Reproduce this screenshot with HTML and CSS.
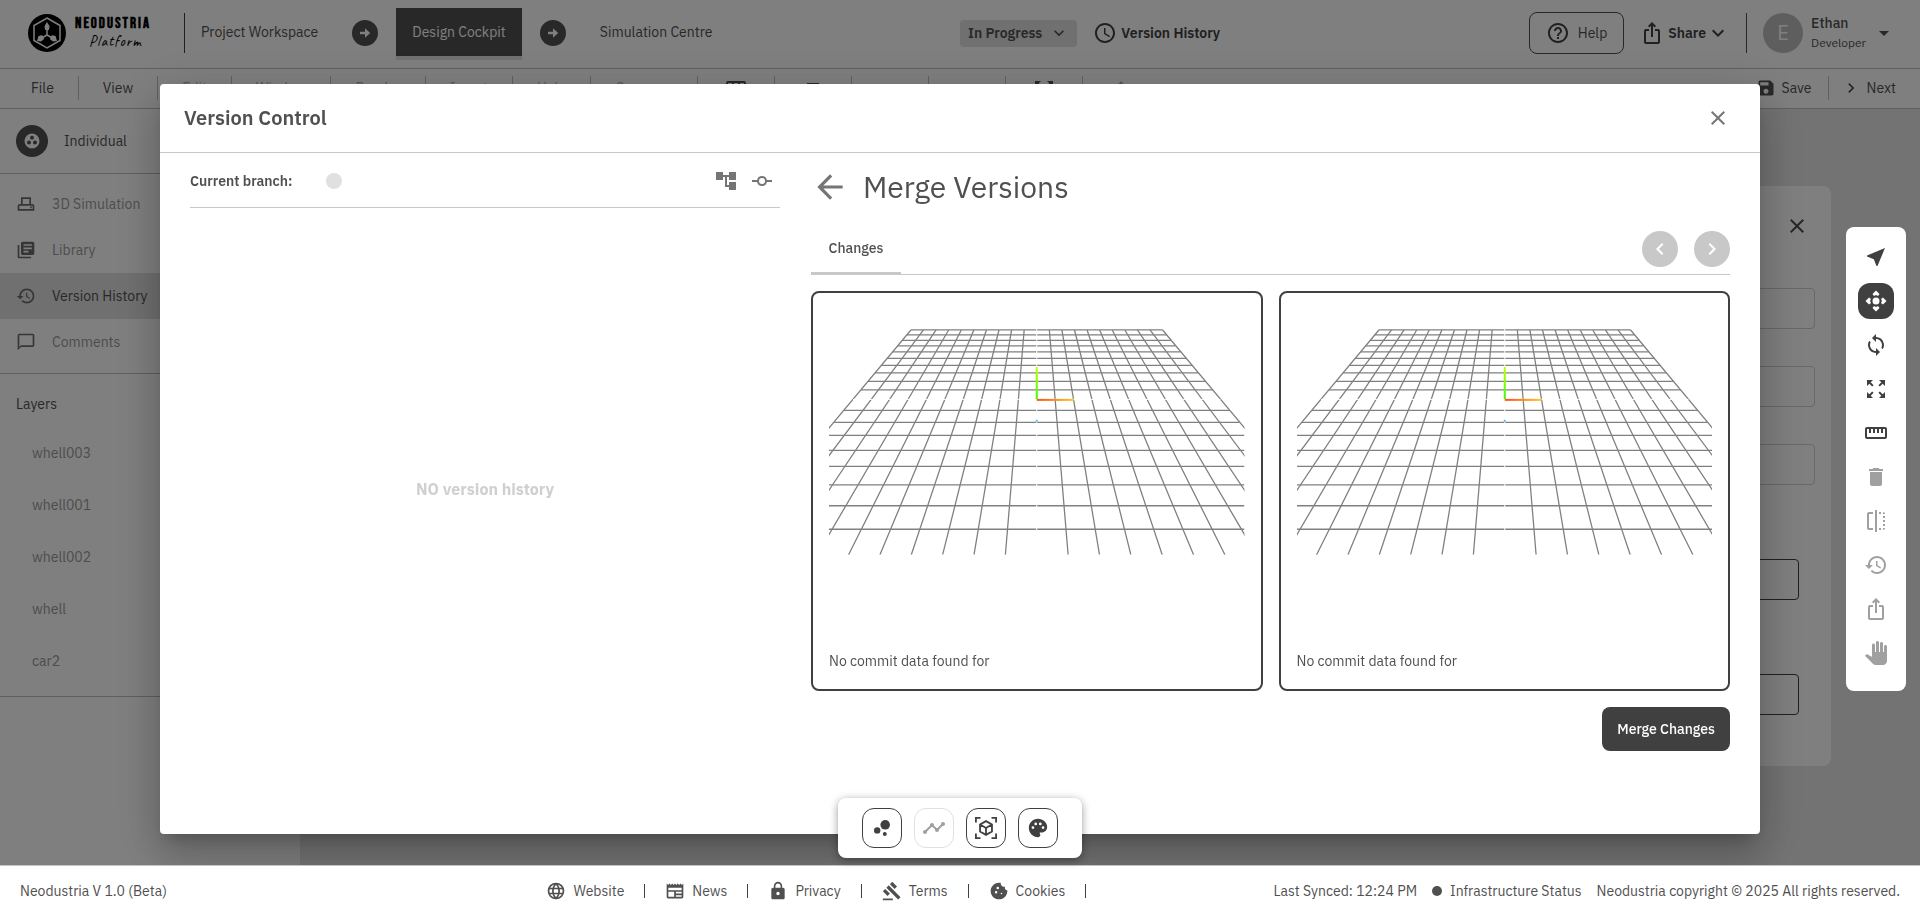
FILE: index.html
```html
<!DOCTYPE html>
<html lang="en">
<head>
  <meta charset="UTF-8">
  <meta name="viewport" content="width=device-width, initial-scale=1">
  <title>Neodustria Platform - Version Control</title>
  <link rel="stylesheet" href="styles.css">
</head>
<body>

  <!-- icons -->
  <svg class="sprite" xmlns="http://www.w3.org/2000/svg" aria-hidden="true">
    <symbol id="i-arrow-circle" viewBox="0 0 26 26">
      <circle cx="13" cy="13" r="13"/>
      <path fill="#fff" d="M8 11.7h5V8.2l5.2 4.8-5.2 4.8v-3.5H8z"/>
    </symbol>
    <symbol id="i-clock" viewBox="0 0 24 24"><path d="M11.99 2C6.47 2 2 6.48 2 12s4.47 10 9.99 10C17.52 22 22 17.52 22 12S17.52 2 11.99 2zM12 20c-4.42 0-8-3.58-8-8s3.58-8 8-8 8 3.58 8 8-3.58 8-8 8zm.5-13H11v6l5.25 3.15.75-1.23-4.5-2.67z"/></symbol>
    <symbol id="i-help" viewBox="0 0 24 24"><path d="M11 18h2v-2h-2v2zm1-16C6.48 2 2 6.48 2 12s4.48 10 10 10 10-4.48 10-10S17.52 2 12 2zm0 18c-4.41 0-8-3.59-8-8s3.59-8 8-8 8 3.59 8 8-3.59 8-8 8zm0-14c-2.21 0-4 1.79-4 4h2c0-1.1.9-2 2-2s2 .9 2 2c0 2-3 1.75-3 5h2c0-2.25 3-2.5 3-5 0-2.21-1.79-4-4-4z"/></symbol>
    <symbol id="i-share" viewBox="0 0 24 24"><path d="M16 5l-1.42 1.42-1.59-1.59V16h-1.98V4.83L9.42 6.42 8 5l4-4 4 4zm4 5v11c0 1.1-.9 2-2 2H6c-1.11 0-2-.9-2-2V10c0-1.11.89-2 2-2h3v2H6v11h12V10h-3V8h3c1.1 0 2 .89 2 2z"/></symbol>
    <symbol id="i-down" viewBox="0 0 24 24"><path d="M7.41 8.59 12 13.17l4.59-4.58L18 10l-6 6-6-6z"/></symbol>
    <symbol id="i-caret" viewBox="0 0 24 24"><path d="m7 10 5 5 5-5z"/></symbol>
    <symbol id="i-left" viewBox="0 0 24 24"><path d="M15.41 7.41 14 6l-6 6 6 6 1.41-1.41L10.83 12z"/></symbol>
    <symbol id="i-right" viewBox="0 0 24 24"><path d="M10 6 8.59 7.41 13.17 12l-4.58 4.59L10 18l6-6z"/></symbol>
    <symbol id="i-close" viewBox="0 0 24 24"><path d="M19 6.41 17.59 5 12 10.59 6.41 5 5 6.41 10.59 12 5 17.59 6.41 19 12 13.41 17.59 19 19 17.59 13.41 12z"/></symbol>
    <symbol id="i-back" viewBox="0 0 24 24"><path d="M20 11H7.83l5.59-5.59L12 4l-8 8 8 8 1.41-1.41L7.83 13H20z"/></symbol>
    <symbol id="i-save" viewBox="0 0 24 24"><path d="M17 3H5c-1.11 0-2 .9-2 2v14c0 1.1.89 2 2 2h14c1.1 0 2-.9 2-2V7l-4-4zm-5 16c-1.66 0-3-1.34-3-3s1.34-3 3-3 3 1.34 3 3-1.34 3-3 3zm3-10H5V5h10v4z"/></symbol>
    <symbol id="i-table" viewBox="0 0 24 24"><path d="M20 3H4a2 2 0 0 0-2 2v14a2 2 0 0 0 2 2h16a2 2 0 0 0 2-2V5a2 2 0 0 0-2-2zM8 19H4v-6h4zm0-8H4V5h4zm6 8h-4v-6h4zm0-8h-4V5h4zm6 8h-4v-6h4zm0-8h-4V5h4z"/></symbol>
    <symbol id="i-layers" viewBox="0 0 24 24"><path d="M6 5h12v5H6zm0 7h12v5H6z"/></symbol>
    <symbol id="i-undo" viewBox="0 0 24 24"><path d="M12.5 8c-2.65 0-5.05.99-6.9 2.6L2 7v9h9l-3.62-3.62A8 8 0 0 1 20.1 16l2.37-.78A10.5 10.5 0 0 0 12.5 8z"/></symbol>
    <symbol id="i-up" viewBox="0 0 24 24"><path d="m12 3 7 8h-4v8H9v-8H5z"/></symbol>
    <symbol id="i-group" viewBox="0 0 24 24">
      <circle cx="12" cy="12" r="10"/>
      <g fill="#505050"><circle cx="12" cy="7.5" r="2.6"/><circle cx="8" cy="14" r="2.6"/><circle cx="16" cy="14" r="2.6"/></g>
    </symbol>
    <symbol id="i-sim" viewBox="0 0 24 24"><path fill="none" stroke="currentColor" stroke-width="2" d="M7 13V5h10v8M3 19v-4.5q0-1.5 1.5-1.5h15q1.5 0 1.5 1.5V19zM17 16h2"/></symbol>
    <symbol id="i-library" viewBox="0 0 24 24"><path d="M4 6H2v14c0 1.1.9 2 2 2h14v-2H4V6zm16-4H8c-1.1 0-2 .9-2 2v12c0 1.1.9 2 2 2h12c1.1 0 2-.9 2-2V4c0-1.1-.9-2-2-2zm-1 9H9V9h10v2zm-4 4H9v-2h6v2zm4-8H9V5h10v2z"/></symbol>
    <symbol id="i-history" viewBox="0 0 24 24"><path d="M13 3c-4.97 0-9 4.03-9 9H1l3.89 3.89.07.14L9 12H6c0-3.87 3.13-7 7-7s7 3.13 7 7-3.13 7-7 7c-1.93 0-3.68-.79-4.94-2.06l-1.42 1.42C8.27 19.99 10.51 21 13 21c4.97 0 9-4.03 9-9s-4.03-9-9-9zm-1 5v5l4.28 2.54.72-1.21-3.5-2.08V8H12z"/></symbol>
    <symbol id="i-comment" viewBox="0 0 24 24"><path d="M20 2H4c-1.1 0-2 .9-2 2v18l4-4h14c1.1 0 2-.9 2-2V4c0-1.1-.9-2-2-2zm0 14H6l-2 2V4h16v12z"/></symbol>
    <symbol id="i-tree" viewBox="0 0 24 24"><path d="M22 11V3h-7v3H9V3H2v8h7V8h2v10h4v3h7v-8h-7v3h-2V8h2v3z"/></symbol>
    <symbol id="i-commit" viewBox="0 0 24 24"><path d="M16.9 11A5 5 0 0 0 7.1 11H2v2h5.1a5 5 0 0 0 9.8 0H22v-2zM12 15a3 3 0 1 1 0-6 3 3 0 0 1 0 6z"/></symbol>
    <symbol id="i-near" viewBox="0 0 24 24"><path d="M21 3 3 10.530v.98l6.840 2.650L12.480 21h.98z"/></symbol>
    <symbol id="i-move" viewBox="0 0 24 24"><circle cx="12" cy="12" r="3.5"/><path d="M12 1.500l3.500 3.500-1.500 2L12 6l-2 1-1.500-2zM12 22.500l3.500-3.500-1.500-2L12 18l-2-1-1.500 2zM1.500 12l3.500-3.500 2 1.500L6 12l1 2-2 1.500zM22.500 12l-3.500-3.500-2 1.500L18 12l-1 2 2 1.500z"/></symbol>
    <symbol id="i-rotate" viewBox="0 0 24 24"><path d="M12 4V1L8 5l4 4V6c3.310 0 6 2.690 6 6 0 1.010-.25 1.970-.7 2.800l1.460 1.460A7.930 7.930 0 0 0 20 12c0-4.420-3.580-8-8-8zm0 14c-3.310 0-6-2.690-6-6 0-1.010.25-1.970.7-2.800L5.240 7.740A7.930 7.930 0 0 0 4 12c0 4.420 3.580 8 8 8v3l4-4-4-4v3z"/></symbol>
    <symbol id="i-expand" viewBox="0 0 24 24"><path d="m15 3 2.300 2.300-2.890 2.870 1.420 1.420L18.700 6.700 21 9V3zM3 9l2.300-2.300 2.870 2.890 1.420-1.420L6.700 5.300 9 3H3zm6 12-2.300-2.300 2.890-2.870-1.420-1.420L5.300 17.300 3 15v6zm12-6-2.300 2.300-2.870-2.890-1.420 1.420 2.890 2.870L15 21h6z"/></symbol>
    <symbol id="i-ruler" viewBox="0 0 24 24"><path d="M21 6H3c-1.100 0-2 .9-2 2v8c0 1.100.9 2 2 2h18c1.100 0 2-.9 2-2V8c0-1.100-.9-2-2-2zm0 10H3V8h2v4h2V8h2v4h2V8h2v4h2V8h2v4h2V8h2v8z"/></symbol>
    <symbol id="i-trash" viewBox="0 0 24 24"><path d="M6 19c0 1.100.9 2 2 2h8c1.100 0 2-.9 2-2V7H6v12zM19 4h-3.500l-1-1h-5l-1 1H5v2h14V4z"/></symbol>
    <symbol id="i-flip" viewBox="0 0 24 24"><path d="M15 21h2v-2h-2v2zm4-12h2V7h-2v2zM3 5v14c0 1.100.9 2 2 2h4v-2H5V5h4V3H5c-1.100 0-2 .9-2 2zm16-2v2h2c0-1.100-.9-2-2-2zm-8 20h2V1h-2v22zm8-6h2v-2h-2v2zM15 5h2V3h-2v2zm4 8h2v-2h-2v2zm0 8c1.100 0 2-.9 2-2h-2v2z"/></symbol>
    <symbol id="i-hand" viewBox="0 0 24 24"><path d="M23 5.500V20c0 2.200-1.800 4-4 4h-7.300c-1.080 0-2.100-.43-2.850-1.190L1 14.830s1.260-1.230 1.300-1.250c.22-.19.490-.29.790-.29.220 0 .420.060.6.160.040.010 4.310 2.460 4.310 2.460V4c0-.83.670-1.500 1.500-1.500S11 3.170 11 4v7h1V1.500c0-.83.670-1.500 1.500-1.500S15 .67 15 1.500V11h1V2.500c0-.83.670-1.500 1.500-1.500s1.500.67 1.500 1.500V11h1V5.500c0-.83.670-1.500 1.500-1.500s1.500.67 1.500 1.500z"/></symbol>
    <symbol id="i-bubble" viewBox="0 0 24 24"><circle cx="7.200" cy="14.400" r="3.200"/><circle cx="14.800" cy="18" r="2"/><circle cx="15.200" cy="8.800" r="4.800"/></symbol>
    <symbol id="i-timeline" viewBox="0 0 24 24"><path d="M23 8c0 1.100-.9 2-2 2-.18 0-.35-.02-.51-.07l-3.560 3.550c.05.160.07.340.07.520 0 1.100-.9 2-2 2s-2-.9-2-2c0-.18.020-.36.070-.52l-2.550-2.550c-.16.050-.34.070-.52.070s-.36-.02-.52-.07l-4.550 4.560c.05.160.07.330.07.510 0 1.100-.9 2-2 2s-2-.9-2-2 .9-2 2-2c.18 0 .35.020.51.070l4.560-4.550C8.020 9.360 8 9.180 8 9c0-1.100.9-2 2-2s2 .9 2 2c0 .18-.02.360-.07.520l2.550 2.550c.16-.05.340-.07.520-.07s.36.020.52.070l3.550-3.560C19.020 8.350 19 8.180 19 8c0-1.100.9-2 2-2s2 .9 2 2z"/></symbol>
    <symbol id="i-cube" viewBox="0 0 24 24"><path fill="none" stroke="currentColor" stroke-width="2" d="M1 6V1h5M18 1h5v5M23 18v5h-5M6 23H1v-5M12 4.500l6.500 3.700v7.600L12 19.500l-6.500-3.700V8.200zM5.500 8.200l6.500 3.800 6.500-3.800M12 12v7.500"/></symbol>
    <symbol id="i-palette" viewBox="0 0 24 24"><path d="M12 2C6.490 2 2 6.490 2 12s4.490 10 10 10c1.380 0 2.500-1.120 2.500-2.500 0-.61-.23-1.200-.64-1.670-.08-.1-.13-.21-.13-.33 0-.28.22-.5.5-.5H16c3.310 0 6-2.690 6-6 0-4.960-4.490-9-10-9zm-5.500 11a1.500 1.500 0 1 1 0-3 1.500 1.500 0 0 1 0 3zm3-4a1.500 1.500 0 1 1 0-3 1.500 1.500 0 0 1 0 3zm5 0a1.500 1.500 0 1 1 0-3 1.500 1.500 0 0 1 0 3zm3 4a1.500 1.500 0 1 1 0-3 1.500 1.500 0 0 1 0 3z"/></symbol>
    <symbol id="i-globe" viewBox="0 0 24 24"><path fill="none" stroke="currentColor" stroke-width="2" d="M12 3a9 9 0 1 0 0 18 9 9 0 0 0 0-18zM12 3c-5 5-5 13 0 18 5-5 5-13 0-18zM4 9h16M4 15h16"/></symbol>
    <symbol id="i-news" viewBox="0 0 24 24"><path d="m22 3-1.670 1.670L18.670 3 17 4.670 15.330 3l-1.660 1.670L12 3l-1.670 1.670L8.670 3 7 4.670 5.330 3 3.670 4.670 2 3v16c0 1.100.9 2 2 2h16c1.100 0 2-.9 2-2V3zM11 19H4v-6h7v6zm9 0h-7v-2h7v2zm0-4h-7v-2h7v2zm0-4H4V8h16v3z"/></symbol>
    <symbol id="i-lock" viewBox="0 0 24 24"><path d="M18 8h-1V6c0-2.760-2.240-5-5-5S7 3.240 7 6v2H6c-1.100 0-2 .9-2 2v10c0 1.100.9 2 2 2h12c1.100 0 2-.9 2-2V10c0-1.100-.9-2-2-2zm-6 9c-1.100 0-2-.9-2-2s.9-2 2-2 2 .9 2 2-.9 2-2 2zm3.100-9H8.900V6c0-1.710 1.390-3.100 3.100-3.100s3.100 1.390 3.100 3.100v2z"/></symbol>
    <symbol id="i-gavel" viewBox="0 0 24 24"><path d="M1 21h12v2H1zM5.240 8.070l2.830-2.830 14.140 14.140-2.830 2.830zM12.320 1l5.660 5.660-2.830 2.830-5.660-5.660zM3.830 9.480l5.660 5.660-2.830 2.830L1 12.310z"/></symbol>
    <symbol id="i-cookie" viewBox="0 0 24 24"><path d="M21.950 10.990c-1.790-.03-3.700-1.950-2.680-4.220-2.980 1-5.770-1.590-5.190-4.560C6.950.71 2 6.580 2 12c0 5.520 4.480 10 10 10 5.890 0 10.540-5.080 9.950-11.010zM8.500 15a1.500 1.500 0 1 1 0-3 1.500 1.500 0 0 1 0 3zm2-5a1.500 1.500 0 1 1 0-3 1.500 1.500 0 0 1 0 3zm4.500 6a1 1 0 1 1 0-2 1 1 0 0 1 0 2z"/></symbol>

    <!-- empty 3D viewport: floor grid in perspective -->
    <linearGradient id="axis-y" gradientUnits="userSpaceOnUse" x1="0" y1="58" x2="0" y2="90"><stop stop-color="#c8ff00"/><stop offset="1" stop-color="#30ff00"/></linearGradient>
    <linearGradient id="axis-x" gradientUnits="userSpaceOnUse" x1="208" y1="0" x2="245" y2="0"><stop stop-color="#ff5020"/><stop offset="1" stop-color="#ffc820"/></linearGradient>
    <symbol id="floor-grid" viewBox="0 0 416 246">
      <g fill="none" stroke="#808080" stroke-width="1.3">
        <path d="M82 21H334M78 26H338M73 31.500H343M69 37H347M64 43H352M58 49.500H358M52 56.500H364M46 64H370M39 72.500H377M32 81H384M15 101.500H401M5 113.500H411M0 126.500H416M0 141.500H416M0 157.500H416M0 176H416M0 197H416M0 220.500H416"/>
        <path d="M82 21L-106 246M94.600 21L-74.600 246M107.200 21L-43.200 246M119.800 21L-11.800 246M132.400 21L19.600 246M145 21L51 246M157.600 21L82.400 246M170.200 21L113.800 246M182.800 21L145.200 246M195.400 21L176.600 246M220.600 21L239.400 246M233.200 21L270.800 246M245.800 21L302.200 246M258.400 21L333.600 246M271 21L365 246M283.600 21L396.400 246M296.200 21L427.800 246M308.800 21L459.200 246M321.400 21L490.600 246M334 21L522 246"/>
      </g>
      <path fill="none" stroke="#fff" d="M24 90.500H392M208 20V246"/>
      <path stroke="url(#axis-y)" stroke-width="2" d="M208 58V90"/>
      <rect x="208" y="90" width="37" height="2" fill="url(#axis-x)"/>
      <path fill="#40c8f0" d="M207 111h2v2h-2z"/>
    </symbol>
  </svg>

  <div class="app">
    <header class="topbar">
      <div class="topbar-left">
        <a class="logo" href="#">
          <svg width="38" height="38" viewBox="0 0 38 38" aria-hidden="true">
            <circle cx="19" cy="19" r="19"/>
            <path fill="none" stroke="#fff" stroke-width="1.500" d="M19 4l13 7.500v15L19 34 6 26.500v-15z"/>
            <path stroke="#fff" stroke-width="1.500" d="M19 13v8M19 21l-7 4M19 21l7 4"/>
            <path fill="#fff" d="M19 8l2 3.500v4.500h-4v-4.500zM9 27l1.500-5 4-.5 1.500 3.500-3 2.500zM29 27l-1.500-5-4-.5-1.500 3.500 3 2.500z"/>
            <circle cx="19" cy="13" r="2.500" fill="#fff"/><circle cx="13" cy="24" r="2.500" fill="#fff"/><circle cx="25" cy="24" r="2.500" fill="#fff"/>
          </svg>
          <span class="logo-text">
            <span class="logo-name">NEODUSTRIA</span>
            <span class="logo-sub">Platform</span>
          </span>
        </a>
        <nav class="stages">
          <a href="#">Project Workspace</a>
          <svg class="stage-arrow"><use href="#i-arrow-circle"/></svg>
          <a href="#" class="active">Design Cockpit</a>
          <svg class="stage-arrow"><use href="#i-arrow-circle"/></svg>
          <a href="#">Simulation Centre</a>
        </nav>
      </div>
      <div class="topbar-right">
        <button class="status">In Progress <svg class="icon-sm"><use href="#i-down"/></svg></button>
        <button class="history-btn"><svg class="icon"><use href="#i-clock"/></svg>Version History</button>
        <button class="help"><svg class="icon"><use href="#i-help"/></svg>Help</button>
        <button class="share"><svg class="icon"><use href="#i-share"/></svg>Share<svg class="icon icon-down"><use href="#i-down"/></svg></button>
        <button class="user">
          <span class="avatar">E</span>
          <span class="user-text"><span class="user-name">Ethan</span><span class="user-role">Developer</span></span>
          <svg class="icon"><use href="#i-caret"/></svg>
        </button>
      </div>
    </header>

    <nav class="menubar">
      <button>File</button>
      <button>View</button>
      <button disabled>Edit</button>
      <button disabled>Window</button>
      <button disabled>Render</button>
      <button disabled>Insert</button>
      <button disabled>Help</button>
      <button disabled>Compare</button>
      <button class="tool" aria-label="Table"><svg><use href="#i-table"/></svg></button>
      <button class="tool" aria-label="Layers"><svg><use href="#i-layers"/></svg></button>
      <button class="tool" disabled aria-label="Undo"><svg><use href="#i-undo"/></svg></button>
      <button class="tool" disabled aria-label="Redo"><svg><use href="#i-undo"/></svg></button>
      <button class="tool" aria-label="Full screen"><svg><use href="#i-expand"/></svg></button>
      <button class="tool tool-last" disabled aria-label="Upload"><svg><use href="#i-up"/></svg></button>
      <button class="save"><svg><use href="#i-save"/></svg>Save</button>
      <button class="next"><svg><use href="#i-right"/></svg>Next</button>
    </nav>

    <div class="workspace">
      <aside class="sidebar">
        <div class="owner">
          <span class="owner-icon"><svg><use href="#i-group"/></svg></span>
          Individual
        </div>
        <nav class="side-menu">
          <a href="#"><svg><use href="#i-sim"/></svg>3D Simulation</a>
          <a href="#"><svg><use href="#i-library"/></svg>Library</a>
          <a href="#" class="selected"><svg><use href="#i-history"/></svg>Version History</a>
          <a href="#"><svg><use href="#i-comment"/></svg>Comments</a>
        </nav>
        <section class="layers">
          <h2>Layers</h2>
          <ul>
            <li>whell003</li>
            <li>whell001</li>
            <li>whell002</li>
            <li>whell</li>
            <li>car2</li>
          </ul>
        </section>
      </aside>
      <main class="canvas">
        <form class="props">
          <button type="button" class="props-close" aria-label="Close panel"><svg class="icon"><use href="#i-close"/></svg></button>
          <input type="text" aria-label="Name">
          <input type="text" aria-label="Material">
          <input type="text" aria-label="Size">
          <button type="button" class="props-action" aria-label="Apply"></button>
          <button type="button" class="props-action" aria-label="Reset"></button>
        </form>
      </main>
    </div>

    <footer class="footer">
      <span>Neodustria V 1.0 (Beta)</span>
      <nav class="footer-links">
        <a href="#"><svg><use href="#i-globe"/></svg>Website</a>
        <a href="#"><svg><use href="#i-news"/></svg>News</a>
        <a href="#"><svg><use href="#i-lock"/></svg>Privacy</a>
        <a href="#"><svg><use href="#i-gavel"/></svg>Terms</a>
        <a href="#"><svg><use href="#i-cookie"/></svg>Cookies</a>
      </nav>
      <div class="footer-status">
        <span>Last Synced: 12:24 PM</span>
        <span class="infra">Infrastructure Status</span>
        <span>Neodustria copyright © 2025 All rights reserved.</span>
      </div>
    </footer>
  </div>

  <div class="backdrop">
    <div class="modal" role="dialog" aria-labelledby="modal-title">
      <div class="modal-header">
        <h1 id="modal-title">Version Control</h1>
        <button class="icon-btn" aria-label="Close"><svg class="icon"><use href="#i-close"/></svg></button>
      </div>
      <div class="modal-body">
        <section class="history">
          <div class="branch-bar">
            <strong>Current branch:</strong>
            <span class="branch-dot"></span>
            <button class="icon-btn" aria-label="Tree view"><svg class="icon"><use href="#i-tree"/></svg></button>
            <button class="icon-btn" aria-label="Commit view"><svg class="icon"><use href="#i-commit"/></svg></button>
          </div>
          <p class="empty">NO version history</p>
        </section>

        <section class="merge">
          <div class="merge-title">
            <button class="icon-btn" aria-label="Back"><svg><use href="#i-back"/></svg></button>
            <h2>Merge Versions</h2>
          </div>
          <div class="tabs">
            <button class="tab">Changes</button>
            <button class="round" aria-label="Previous"><svg class="icon"><use href="#i-left"/></svg></button>
            <button class="round" aria-label="Next"><svg class="icon"><use href="#i-right"/></svg></button>
          </div>
          <div class="compare">
            <article class="version">
              <svg viewBox="0 0 416 246"><use href="#floor-grid"/></svg>
              <p>No commit data found for</p>
            </article>
            <article class="version">
              <svg viewBox="0 0 416 246"><use href="#floor-grid"/></svg>
              <p>No commit data found for</p>
            </article>
          </div>
          <button class="merge-btn">Merge Changes</button>
        </section>
      </div>
    </div>
  </div>

  <div class="side-tools">
    <button aria-label="Select"><svg><use href="#i-near"/></svg></button>
    <button class="on" aria-label="Move"><svg><use href="#i-move"/></svg></button>
    <button aria-label="Rotate"><svg><use href="#i-rotate"/></svg></button>
    <button aria-label="Scale"><svg><use href="#i-expand"/></svg></button>
    <button aria-label="Measure"><svg><use href="#i-ruler"/></svg></button>
    <button disabled aria-label="Delete"><svg><use href="#i-trash"/></svg></button>
    <button disabled aria-label="Mirror"><svg><use href="#i-flip"/></svg></button>
    <button disabled aria-label="History"><svg><use href="#i-history"/></svg></button>
    <button disabled aria-label="Export"><svg><use href="#i-share"/></svg></button>
    <button disabled aria-label="Pan"><svg><use href="#i-hand"/></svg></button>
  </div>

  <div class="bottom-tools">
    <button aria-label="Points"><svg><use href="#i-bubble"/></svg></button>
    <button disabled aria-label="Edges"><svg><use href="#i-timeline"/></svg></button>
    <button aria-label="Object"><svg class="small"><use href="#i-cube"/></svg></button>
    <button aria-label="Material"><svg class="small"><use href="#i-palette"/></svg></button>
  </div>

</body>
</html>
```
FILE: styles.css
```css
* {
  box-sizing: border-box;
}
body {
  margin: 0;
  font-family: "IBM Plex Sans", Roboto, sans-serif;
  font-size: 14px;
  line-height: 20px;
  color: #505050;
  background: #fff;
}
h1, h2, p, ul {
  margin: 0;
  padding: 0;
}
ul { list-style: none; }
a {
  color: inherit;
  text-decoration: none;
}
button {
  display: flex;
  align-items: center;
  margin: 0;
  padding: 0;
  border: 0;
  background: none;
  font: inherit;
  color: inherit;
}
svg {
  display: block;
  flex: none;
  fill: currentColor;
}
.sprite {
  position: absolute;
  width: 0;
  height: 0;
}
.icon {
  width: 24px;
  height: 24px;
}
.app {
  display: flex;
  flex-direction: column;
  min-height: 100vh;
}

/* top bar */
.topbar {
  display: grid;
  grid-template-columns: 1fr 1fr;
  height: 69px;
  border-bottom: 1px solid #bebebe;
}
.topbar-left, .topbar-right {
  display: flex;
  align-items: center;
  padding-bottom: 2px;
  white-space: nowrap;
}
.topbar-left { padding-left: 28px; }
.logo {
  display: flex;
  align-items: center;
  gap: 9px;
  width: 156px;
  color: #000;
}
.logo-text {
  display: flex;
  flex-direction: column;
}
.logo-name {
  font: 700 15px/18px "Bebas Neue", "Liberation Sans Narrow", sans-serif;
  letter-spacing: 2px;
}
.logo-sub {
  padding-left: 14px;
  font: 15px/18px Caveat, "Dancing Script", cursive;
  letter-spacing: 1px;
}
.stages {
  display: flex;
  align-items: center;
  gap: 18px;
}
.stages::before {
  content: "";
  width: 1px;
  height: 40px;
  margin-right: -18px;
  background: #404040;
}
.stages a {
  padding: 14px 16px;
  margin-bottom: 3px;
}
.stages a.active {
  background: #505050;
  color: #fff;
  box-shadow: 0 4px #e0e0e0;
}
.stage-arrow {
  width: 26px;
  height: 26px;
  color: #505050;
}
.topbar-right { padding-right: 24px; }
.status {
  gap: 7px;
  height: 27px;
  padding: 0 8px;
  border-radius: 4px;
  background: #e0e0e0;
  font-weight: 600;
  margin-right: 16px;
}
.icon-sm {
  width: 20px;
  height: 20px;
}
.history-btn {
  gap: 4px;
  font-weight: 600;
  color: #404040;
}
.help {
  gap: 8px;
  height: 42px;
  margin-left: auto;
  padding: 0 16px;
  border: 1px solid #505050;
  border-radius: 8px;
}
.help svg, .share, .share svg { color: #404040; }
.share {
  gap: 4px;
  margin-left: 16px;
  padding-right: 16px;
  font-weight: 600;
}
.icon-down { margin-left: -4px; }
.user {
  gap: 8px;
  padding-left: 16px;
  border-left: 1px solid #505050;
  text-align: left;
}
.user .icon { margin-left: -2px; }
.avatar {
  width: 40px;
  height: 40px;
  border-radius: 50%;
  background: #bdbdbd;
  color: #fff;
  font-size: 20px;
  line-height: 40px;
  text-align: center;
}
.user-text {
  display: flex;
  flex-direction: column;
}
.user-name { font-weight: 500; }
.user-role { font-size: 12px; }

/* menu bar */
.menubar {
  display: flex;
  align-items: center;
  height: 40px;
  padding: 0 0 2px 7px;
  border-bottom: 1px solid #bebebe;
}
.menubar button {
  height: 24px;
  padding: 0 24px;
  border-right: 1px solid #bebebe;
}
.menubar button:disabled { color: #b0b0b0; }
.menubar .tool { padding: 4px 26px 0; }
.menubar .tool-last { border-right: 0; }
.menubar svg {
  width: 24px;
  height: 24px;
}
.menubar .save svg, .menubar .next svg {
  width: 20px;
  height: 20px;
}
.menubar .save {
  margin-left: auto;
  padding-right: 16px;
}
.menubar .save, .menubar .next { gap: 6px; }
.menubar .next {
  padding: 0 24px 0 12px;
  border: 0;
}

/* workspace */
.workspace {
  display: flex;
  flex: 1;
}
.sidebar {
  width: 300px;
}
.owner {
  display: flex;
  align-items: center;
  gap: 16px;
  height: 65px;
  padding: 0 16px;
  border-bottom: 1px solid #bebebe;
}
.owner-icon {
  display: grid;
  place-items: center;
  width: 32px;
  height: 32px;
  border-radius: 50%;
  background: #505050;
  color: #fff;
}
.owner-icon svg {
  width: 18px;
  height: 18px;
}
.side-menu {
  padding: 7px 0 8px;
  border-bottom: 1px solid #bebebe;
}
.side-menu a {
  display: flex;
  align-items: center;
  gap: 16px;
  height: 46px;
  padding: 0 16px;
  color: #9a9a9a;
}
.side-menu a svg {
  width: 20px;
  height: 20px;
  color: #6c6c6c;
}
.side-menu a.selected {
  background: #e0e0e0;
  color: #505050;
}
.layers {
  padding: 20px 16px 9px;
  border-bottom: 1px solid #bebebe;
}
.layers h2 {
  font-size: 14px;
  font-weight: 400;
}
.layers ul { padding: 13px 16px 0; }
.layers li {
  line-height: 52px;
  color: #9a9a9a;
}
.canvas {
  display: flex;
  flex: 1;
  justify-content: flex-end;
  align-items: flex-start;
  padding: 77px 89px 0 0;
  background: #e6e6e6;
}
.props {
  display: flex;
  flex-direction: column;
  gap: 37px;
  width: 360px;
  padding: 25px 16px 51px;
  border-radius: 8px;
  background: #fff;
}
.props-close {
  align-self: flex-end;
  padding: 3px 6px 13px;
}
.props input {
  height: 41px;
  border: 1px solid #d0d0d0;
  border-radius: 4px;
}
.props-action {
  height: 41px;
  margin: 37px 16px 0;
  border: 1px solid #404040;
  border-radius: 4px;
}

/* footer */
.footer {
  position: relative;
  z-index: 3;
  display: grid;
  grid-template-columns: 28% auto 1fr;
  align-items: center;
  height: 47px;
  padding: 4px 20px 0;
  border-top: 1px solid #c4c4c4;
  background: #fff;
  white-space: nowrap;
}
.footer-links, .footer-status {
  display: flex;
  align-items: center;
}
.footer-links { gap: 20px; }
.footer-links a {
  display: flex;
  align-items: center;
  gap: 7px;
}
.footer-links a::after {
  content: "";
  width: 1px;
  height: 14px;
  margin-left: 13px;
  background: #404040;
}
.footer-links svg {
  width: 20px;
  height: 20px;
}
.footer-status {
  justify-content: flex-end;
  gap: 15px;
}
.infra {
  display: flex;
  align-items: center;
  gap: 8px;
}
.infra::before {
  content: "";
  width: 10px;
  height: 10px;
  border-radius: 50%;
  background: #505050;
}

/* modal */
.backdrop {
  position: fixed;
  inset: 0;
  z-index: 2;
  display: flex;
  padding: 84px 160px 78px;
  background: rgba(0, 0, 0, 0.5);
}
.modal {
  display: flex;
  flex-direction: column;
  flex: 1;
  border-radius: 4px;
  background: #fff;
  box-shadow: 0 11px 15px -7px rgba(0, 0, 0, 0.2), 0 24px 38px 3px rgba(0, 0, 0, 0.14), 0 9px 46px 8px rgba(0, 0, 0, 0.12);
}
.modal-header {
  display: flex;
  align-items: center;
  justify-content: space-between;
  height: 69px;
  padding: 0 30px 0 24px;
  border-bottom: 1px solid #c8c8c8;
}
.modal-header h1 {
  font-size: 20px;
  font-weight: 600;
}
.icon-btn { color: #757575; }
.modal-body {
  display: grid;
  grid-template-columns: 590fr 919fr;
  gap: 31px;
  flex: 1;
  padding: 0 30px;
}
.history {
  display: flex;
  flex-direction: column;
}
.branch-bar {
  display: flex;
  align-items: center;
  gap: 12px;
  height: 55px;
  padding: 1px 6px 0 0;
  border-bottom: 1px solid #c8c8c8;
}
.branch-bar strong { font-weight: 600; }
.branch-dot {
  width: 16px;
  height: 16px;
  margin: 0 auto 0 22px;
  border-radius: 50%;
  background: #e0e0e0;
}
.empty {
  padding-top: 271px;
  color: #d0d0d0;
  font-size: 16px;
  font-weight: 700;
  text-align: center;
}
.merge {
  display: flex;
  flex-direction: column;
}
.merge-title {
  display: flex;
  align-items: center;
  gap: 14px;
  height: 68px;
}
.merge-title svg {
  width: 38px;
  height: 38px;
}
.merge-title h2 {
  font-size: 30px;
  font-weight: 400;
  line-height: 40px;
}
.tabs {
  display: flex;
  align-items: center;
  gap: 16px;
  height: 54px;
  padding-top: 2px;
  border-bottom: 1px solid #c8c8c8;
}
.tab {
  justify-content: center;
  align-self: stretch;
  width: 90px;
  margin: 0 auto -1px 0;
  border-bottom: 3px solid #c8c8c8;
  font-weight: 500;
}
.round {
  justify-content: center;
  width: 36px;
  height: 36px;
  border-radius: 50%;
  background: #c8c8c8;
  color: #fff;
}
.compare {
  display: grid;
  grid-template-columns: 1fr 1fr;
  gap: 16px;
  margin: 16px 0;
}
.version {
  display: flex;
  flex-direction: column;
  justify-content: space-between;
  min-height: 400px;
  padding: 16px 16px 18px;
  border: 2px solid #404040;
  border-radius: 8px;
}
.merge-btn {
  align-self: flex-end;
  height: 44px;
  padding: 0 15px;
  border-radius: 8px;
  background: #404040;
  color: #fff;
  font-weight: 500;
}

/* floating toolbars */
.side-tools {
  position: fixed;
  top: 227px;
  right: 14px;
  z-index: 4;
  display: flex;
  flex-direction: column;
  gap: 8px;
  padding: 12px 12px 20px;
  border-radius: 8px;
  background: #fff;
}
.side-tools button, .bottom-tools button {
  justify-content: center;
  width: 36px;
  height: 36px;
  border-radius: 12px;
  color: #404040;
}
.side-tools button.on {
  background: #404040;
  color: #fff;
}
.side-tools button:disabled, .bottom-tools button:disabled { color: #a0a0a0; }
.side-tools svg, .bottom-tools svg {
  width: 24px;
  height: 24px;
}
.bottom-tools {
  position: fixed;
  right: 0;
  bottom: 54px;
  left: 0;
  z-index: 4;
  display: flex;
  gap: 12px;
  width: max-content;
  margin: 0 auto;
  padding: 10px 24px;
  border-radius: 8px;
  background: #fff;
  box-shadow: 0 2px 8px rgba(0, 0, 0, 0.4);
}
.bottom-tools button {
  width: 40px;
  height: 40px;
  border: 1px solid #404040;
}
.bottom-tools button:disabled { border-color: #e0e0e0; }
.bottom-tools .small {
  width: 22px;
  height: 22px;
}
```
